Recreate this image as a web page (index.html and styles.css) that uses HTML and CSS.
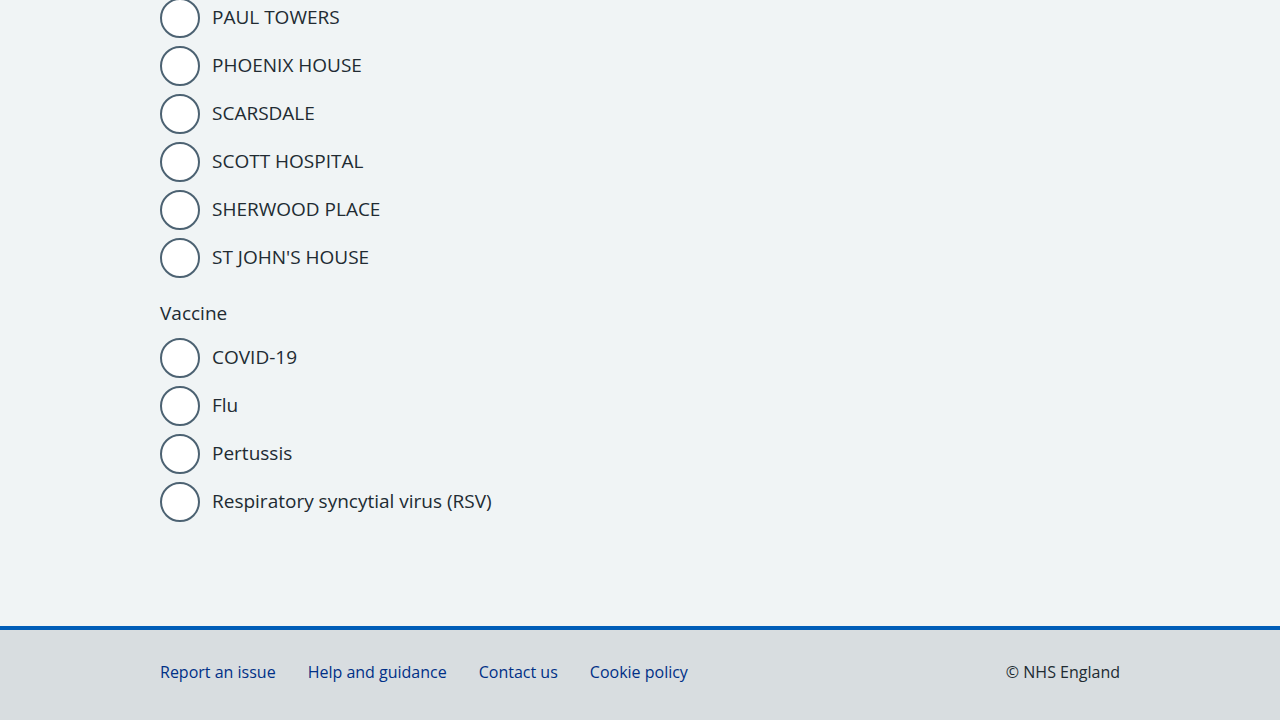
FILE: index.html
```html
<!DOCTYPE html>
<html lang="en">
<head>
<meta charset="utf-8">
<title>Filters</title>
<link rel="stylesheet" href="styles.css">
</head>
<body>
<main class="main">
  <div class="container">
    <div class="radios radios-first">
      <label class="radio"><span class="radio-circle"></span><span class="radio-label">PAUL TOWERS</span></label>
      <label class="radio"><span class="radio-circle"></span><span class="radio-label">PHOENIX HOUSE</span></label>
      <label class="radio"><span class="radio-circle"></span><span class="radio-label">SCARSDALE</span></label>
      <label class="radio"><span class="radio-circle"></span><span class="radio-label">SCOTT HOSPITAL</span></label>
      <label class="radio"><span class="radio-circle"></span><span class="radio-label">SHERWOOD PLACE</span></label>
      <label class="radio"><span class="radio-circle"></span><span class="radio-label">ST JOHN'S HOUSE</span></label>
    </div>
    <div class="legend">Vaccine</div>
    <div class="radios">
      <label class="radio"><span class="radio-circle"></span><span class="radio-label">COVID-19</span></label>
      <label class="radio"><span class="radio-circle"></span><span class="radio-label">Flu</span></label>
      <label class="radio"><span class="radio-circle"></span><span class="radio-label">Pertussis</span></label>
      <label class="radio"><span class="radio-circle"></span><span class="radio-label">Respiratory syncytial virus (RSV)</span></label>
    </div>
  </div>
</main>
<footer class="footer">
  <div class="container footer-inner">
    <ul class="footer-links">
      <li><a href="#">Report an issue</a></li>
      <li><a href="#">Help and guidance</a></li>
      <li><a href="#">Contact us</a></li>
      <li><a href="#">Cookie policy</a></li>
    </ul>
    <p class="copyright">© NHS England</p>
  </div>
</footer>
</body>
</html>
```

FILE: styles.css
```css
html, body {
  margin: 0;
  padding: 0;
}
body {
  background: #f0f4f5;
  color: #212b32;
  font-family: "Open Sans", "Noto Sans", sans-serif;
  height: 720px;
  display: flex;
  flex-direction: column;
  overflow: hidden;
}
.main {
  flex: 1;
}
.container {
  width: 960px;
  margin: 0 auto;
}
.radios {
  display: flex;
  flex-direction: column;
  gap: 8px;
}
.radios-first {
  margin-top: -2px;
}
.radio {
  display: flex;
  align-items: center;
  height: 40px;
  cursor: pointer;
}
.radio-circle {
  box-sizing: border-box;
  width: 40px;
  height: 40px;
  border: 2px solid #4c6272;
  border-radius: 50%;
  background: #ffffff;
  flex: none;
}
.radio-label {
  padding-left: 12px;
  padding-bottom: 2px;
  font-size: 19px;
  line-height: 28px;
}
.legend {
  margin-top: 21px;
  margin-bottom: 11px;
  font-size: 19px;
  line-height: 28px;
}
.footer {
  border-top: 4px solid #005eb8;
  background: #d8dde0;
  height: 90px;
}
.footer-inner {
  display: flex;
  justify-content: space-between;
  padding-top: 30px;
}
.footer-links {
  list-style: none;
  margin: 0;
  padding: 0;
  display: flex;
  gap: 32px;
}
.footer-links a {
  color: #003087;
  text-decoration: none;
  font-size: 16px;
  line-height: 24px;
}
.copyright {
  margin: 0;
  font-size: 16px;
  line-height: 24px;
}
```
